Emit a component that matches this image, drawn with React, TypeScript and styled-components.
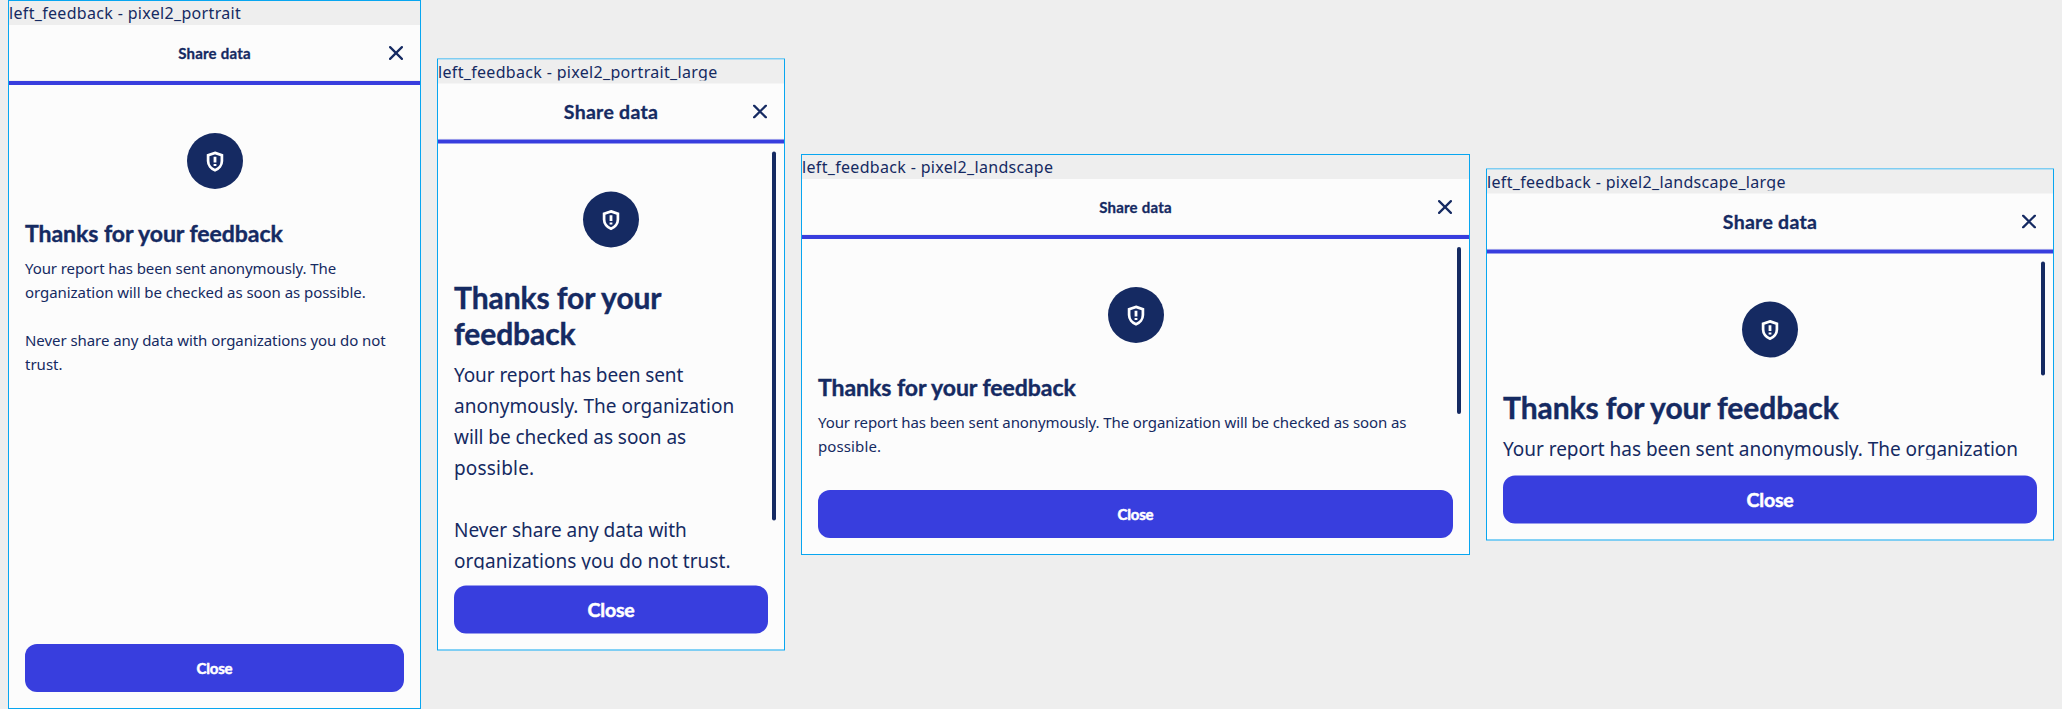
import React from "react";
import styled, { createGlobalStyle, css } from "styled-components";

const navy = "#152a62";
const indigo = "#383ede";
const outline = "#08a6f0";
const surface = "#fcfcfc";
const backdrop = "#eeeeee";

const textFont = `"Noto Sans", "Open Sans", sans-serif`;
const boldFont = `"Lato", "Noto Sans", sans-serif`;

const GlobalStyle = createGlobalStyle`
  * { box-sizing: border-box; }
  body { margin: 0; background: ${backdrop}; color: ${navy}; overflow: hidden; }
`;

const Board = styled.main`
  display: flex;
  align-items: center;
  gap: 16px;
  width: 2062px;
  height: 709px;
  padding: 0 8px;
  background: ${backdrop};
`;

const Frame = styled.section<{ $width: number; $height: number; $shift: boolean }>`
  display: flex;
  flex-direction: column;
  flex: none;
  width: ${(p) => p.$width}px;
  height: ${(p) => p.$height}px;
  border: 1px solid ${outline};
  background: ${surface};
  ${(p) =>
    p.$shift &&
    css`
      margin-bottom: 1px;
      transform: translateY(0.5px);
    `}
`;

const LabelStrip = styled.div`
  flex: none;
  height: 24px;
  background: ${backdrop};
`;

const Label = styled.div<{ $large: boolean }>`
  height: ${(p) => (p.$large ? 21 : 24)}px;
  overflow: hidden;
  font: 400 16px/24px ${textFont};
  letter-spacing: 0.325px;
  white-space: nowrap;
`;

const Header = styled.header`
  display: grid;
  grid-template-columns: 1fr auto 1fr;
  align-items: center;
  flex: none;
  height: 56px;
  padding: 0 17px;
  border-bottom: 1px solid #f0f0f2;
`;

const Title = styled.h1<{ $large: boolean }>`
  grid-column: 2;
  margin: 1px 0 0;
  font: 700 ${(p) => (p.$large ? 19.5 : 15)}px/28px ${boldFont};
  letter-spacing: ${(p) => (p.$large ? 0.28 : 0.22)}px;
  -webkit-text-stroke: 0.3px currentColor;
`;

const CloseIconButton = styled.button`
  justify-self: end;
  display: flex;
  margin: 1px 0 0;
  padding: 0;
  border: 0;
  background: none;
  color: inherit;
`;

const Accent = styled.div`
  flex: none;
  height: 4px;
  background: ${indigo};
`;

const Content = styled.div`
  position: relative;
  flex: 1;
  min-height: 0;
  overflow: hidden;
  padding: 48px 16px 0;
`;

const ScrollThumb = styled.div<{ $length: number }>`
  position: absolute;
  top: 8px;
  right: 8px;
  width: 4px;
  height: ${(p) => p.$length}px;
  border-radius: 2px;
  background: ${navy};
`;

const Badge = styled.div`
  display: flex;
  align-items: center;
  justify-content: center;
  width: 56px;
  height: 56px;
  margin: 0 auto;
  border-radius: 50%;
  background: ${navy};
`;

const Heading = styled.h2<{ $large: boolean }>`
  margin: ${(p) => (p.$large ? "31px 0 8.5px" : "30px 0 9px")};
  font: 700 ${(p) => (p.$large ? "30px/36px" : "23px/28px")} ${boldFont};
  -webkit-text-stroke: 0.4px currentColor;
`;

const Paragraph = styled.p<{ $large: boolean }>`
  margin: 0 0 ${(p) => (p.$large ? 31 : 24)}px;
  font: 400 ${(p) => (p.$large ? "19px/31px" : "15px/24px")} ${textFont};
`;

const Line = styled.span<{ $track?: number }>`
  display: block;
  white-space: nowrap;
  letter-spacing: ${(p) => p.$track ?? 0}px;
`;

const Footer = styled.footer`
  flex: none;
  padding: 16px;
`;

const CloseButton = styled.button<{ $large: boolean }>`
  display: block;
  width: 100%;
  height: 48px;
  padding: 0;
  border: 0;
  border-radius: 12px;
  background: ${indigo};
  color: #fff;
  font: 700 ${(p) => (p.$large ? 19.5 : 15)}px/48px ${boldFont};
  letter-spacing: -0.2px;
  -webkit-text-stroke: 0.5px currentColor;
`;

const CrossIcon = () => (
  <svg width="14" height="14" viewBox="0 0 14 14" fill="none" stroke="currentColor" strokeWidth="2.2" strokeLinecap="round">
    <path d="M1.1 1.1 12.9 12.9M12.9 1.1 1.1 12.9" />
  </svg>
);

const ShieldIcon = () => (
  <svg width="18" height="21" viewBox="0 0 18 21">
    <path
      d="M9 1.9 15.9 4.3V10C15.9 14.2 12.9 17.8 9 19.2 5.1 17.8 2.1 14.2 2.1 10V4.3Z"
      fill="none"
      stroke="#fff"
      strokeWidth="2.7"
    />
    <path d="M7.6 5.8h2.8v5.8H7.6zM7.6 12.9h2.8v2.2H7.6z" fill="#fff" />
  </svg>
);

type TextLine = [text: string, track: number];

interface Preview {
  name: string;
  width: number;
  height: number;
  large: boolean;
  thumb?: number;
  heading: string[];
  paragraphs: TextLine[][];
}

const previews: Preview[] = [
  {
    name: "pixel2_portrait",
    width: 413,
    height: 709,
    large: false,
    heading: ["Thanks for your feedback"],
    paragraphs: [
      [
        ["Your report has been sent anonymously. The", -0.09],
        ["organization will be checked as soon as possible.", -0.05],
      ],
      [
        ["Never share any data with organizations you do not", -0.06],
        ["trust.", 0],
      ],
    ],
  },
  {
    name: "pixel2_portrait_large",
    width: 348,
    height: 592,
    large: true,
    thumb: 369,
    heading: ["Thanks for your", "feedback"],
    paragraphs: [
      [
        ["Your report has been sent", -0.09],
        ["anonymously. The organization", 0.01],
        ["will be checked as soon as", -0.05],
        ["possible.", 0.18],
      ],
      [
        ["Never share any data with", 0],
        ["organizations you do not trust.", 0.04],
      ],
    ],
  },
  {
    name: "pixel2_landscape",
    width: 669,
    height: 401,
    large: false,
    thumb: 167,
    heading: ["Thanks for your feedback"],
    paragraphs: [
      [
        ["Your report has been sent anonymously. The organization will be checked as soon as", -0.09],
        ["possible.", 0.11],
      ],
    ],
  },
  {
    name: "pixel2_landscape_large",
    width: 568,
    height: 372,
    large: true,
    thumb: 114,
    heading: ["Thanks for your feedback"],
    paragraphs: [[["Your report has been sent anonymously. The organization", -0.025]]],
  },
];

const PreviewFrame = ({ preview }: { preview: Preview }) => {
  const { name, width, height, large, thumb, heading, paragraphs } = preview;
  return (
    <Frame $width={width} $height={height} $shift={large}>
      <LabelStrip>
        <Label $large={large}>left_feedback - {name}</Label>
      </LabelStrip>
      <Header>
        <Title $large={large}>Share data</Title>
        <CloseIconButton aria-label="Close">
          <CrossIcon />
        </CloseIconButton>
      </Header>
      <Accent />
      <Content>
        {thumb && <ScrollThumb $length={thumb} />}
        <Badge>
          <ShieldIcon />
        </Badge>
        <Heading $large={large}>
          {heading.map((text) => (
            <Line key={text} $track={large ? -0.08 : -0.04}>
              {text}
            </Line>
          ))}
        </Heading>
        {paragraphs.map((lines, i) => (
          <Paragraph key={i} $large={large}>
            {lines.map(([text, track]) => (
              <Line key={text} $track={track}>
                {text}
              </Line>
            ))}
          </Paragraph>
        ))}
      </Content>
      <Footer>
        <CloseButton $large={large}>Close</CloseButton>
      </Footer>
    </Frame>
  );
};

export default function App() {
  return (
    <>
      <GlobalStyle />
      <Board>
        {previews.map((preview) => (
          <PreviewFrame key={preview.name} preview={preview} />
        ))}
      </Board>
    </>
  );
}
